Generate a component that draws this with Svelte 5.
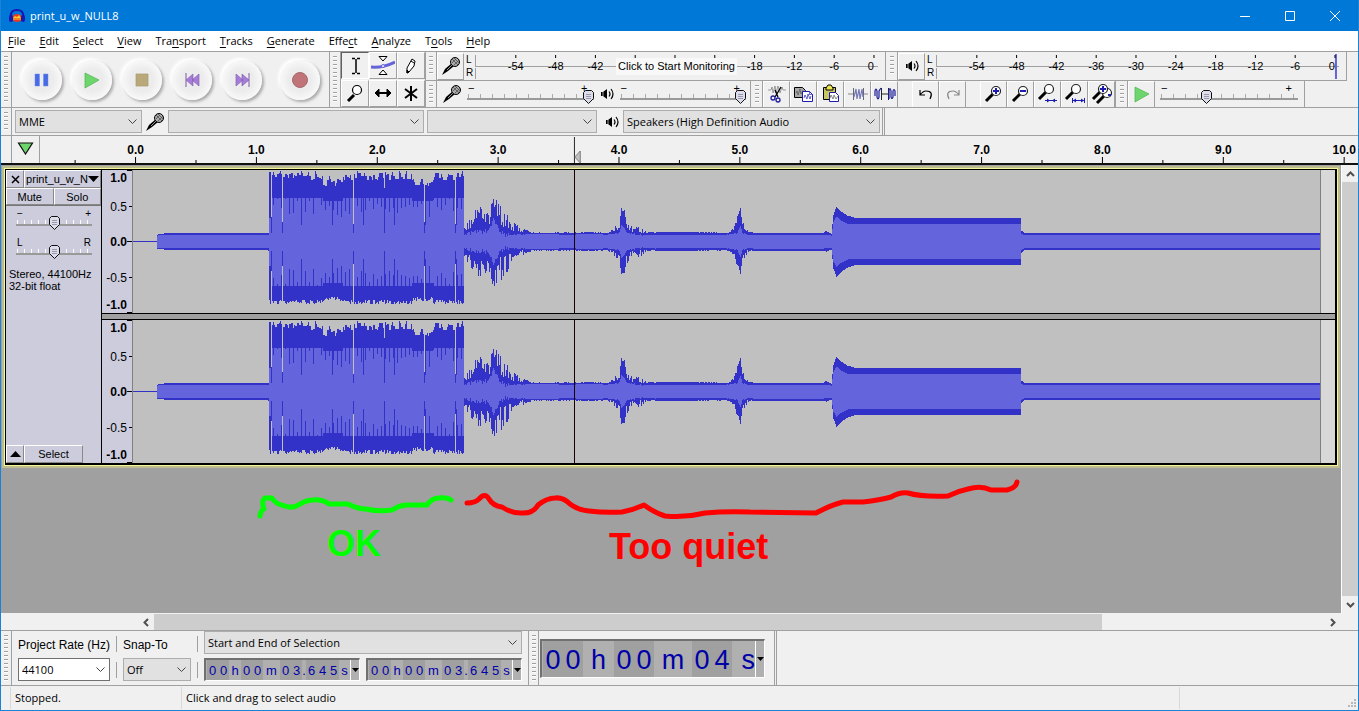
<script>
    const menus = [
        ["", "F", "ile"],
        ["", "E", "dit"],
        ["", "S", "elect"],
        ["", "V", "iew"],
        ["Tra", "n", "sport"],
        ["", "T", "racks"],
        ["", "G", "enerate"],
        ["Effe", "c", "t"],
        ["", "A", "nalyze"],
        ["T", "o", "ols"],
        ["", "H", "elp"],
    ];

    const transport = ["Pause", "Play", "Stop", "Start", "End", "Record"];
    const tools = ["Selection", "Envelope", "Draw", "Zoom", "Shift", "Multi"];
    const edits = ["Cut", "Copy", "Paste", "Trim", "Silence"];
    const zooms = ["ZoomIn", "ZoomOut", "FitSelection", "FitProject", "ZoomToggle"];
    const seconds = [0, 1, 2, 3, 4, 5, 6, 7, 8, 9, 10];
    const dbs = [-54, -48, -42, -36, -30, -24, -18, -12, -6, 0];

    const shortTime = [
        ["d", "00"],
        ["h", "h"],
        ["d", "00"],
        ["m", "m"],
        ["d", "03"],
        ["dot", "."],
        ["d", "645"],
        ["s", "s"],
    ];
    const longTime = [
        ["d", "00"],
        ["h", "h"],
        ["d", "00"],
        ["m", "m"],
        ["d", "04"],
        ["s", "s"],
    ];

    let gain = 50;
    let pan = 50;
    let recVolume = 100;
    let playVolume = 100;
    let speed = 32;

    // amplitude envelope of the clip: [x, outer, inner, jitter]
    const envelope = [
        [0, 0.5, 0, 0],
        [23, 0.5, 0, 0],
        [24, 7, 6, 0],
        [34, 8.5, 6.5, 0],
        [135, 8.5, 6.5, 0],
        [331, 16, 8, 6],
        [336, 26, 10, 14],
        [344, 40, 13, 18],
        [350, 36, 12, 20],
        [356, 35, 14, 20],
        [360, 46, 24, 10],
        [366, 40, 13, 26],
        [373, 35, 10, 22],
        [378, 20, 8, 10],
        [386, 16, 8, 7],
        [398, 10, 8, 2],
        [410, 9, 8, 1],
        [430, 10, 7, 2],
        [441, 9, 7, 1],
        [454, 10, 8, 1],
        [474, 9, 7, 1],
        [482, 16, 9, 7],
        [486, 20, 10, 8],
        [488, 34, 17, 2],
        [491, 32, 14, 4],
        [493, 22, 11, 8],
        [498, 18, 9, 9],
        [508, 15, 7, 7],
        [516, 10, 7, 2],
        [522, 9, 7, 0],
        [562, 10, 7, 1],
        [592, 9, 7, 1],
        [600, 14, 8, 4],
        [604, 28, 10, 8],
        [607, 34, 16, 2],
        [609, 22, 10, 8],
        [614, 12, 7, 4],
        [620, 9, 7, 0],
        [690, 9, 7, 0],
        [693, 11, 7, 1],
        [698, 8, 6, 0],
        [700, 27, 20, 0],
        [703, 35, 25, 0],
        [708, 30, 21, 0],
        [714, 26, 18, 0],
        [722, 23.5, 17.5, 0],
        [887, 23.5, 17.5, 0],
        [888, 11, 8, 0],
        [891, 8.5, 6.5, 0],
        [1187, 8.5, 6.5, 0],
    ];

    const dropouts = { 138: 25, 149: 20, 220: 18, 251: 54, 291: 20, 322: 18 };

    function noise(n) {
        const v = Math.sin(n * 12.9898) * 43758.5453;
        return v - Math.floor(v);
    }

    // closed staircase outline around the centre line
    function outline(ups, downs) {
        let d = "M0 71.5";
        ups.forEach((v, x) => (d += `V${Math.round(71.5 - v)}H${x + 1}`));
        for (let x = downs.length - 1; x >= 0; x--) {
            d += `V${Math.round(71.5 + downs[x])}H${x}`;
        }
        return d + "Z";
    }

    function drawWave() {
        const ups = [];
        const downs = [];
        const cores = [];
        let k = 0;
        for (let x = 0; x < 1187; x++) {
            while (envelope[k + 1][0] <= x) k++;
            const a = envelope[k];
            const b = envelope[k + 1];
            const t = (x - a[0]) / (b[0] - a[0]);
            let up = a[1] + (b[1] - a[1]) * t;
            let core = a[2] + (b[2] - a[2]) * t;
            if (x < 24) {
                up = 0.5;
                core = 0;
            } else if (x >= 135 && x < 136) {
                up = 9;
                core = 6.5;
            }
            let down = up;
            const jitter = a[3] + (b[3] - a[3]) * t;

            if (x >= 136 && x < 331) {
                const sag = (x > 189 && x < 210) || (x > 278 && x < 300) ? 6 : 0;
                up = 69 - sag - noise(x >> 1) * 8 + (x % 7 === 0 ? 3 : 0);
                down = 63 - sag / 2 - noise(x * 3) * 5;
                core = 44 - sag / 2;
                if (x % 4 === 0) core -= noise(x) * 17;
                if (x % 31 === 13) core = 17;
                if (x < 138) {
                    up = 70;
                    core = 24;
                }
                if (dropouts[x]) {
                    up = dropouts[x];
                    down = dropouts[x] + 4;
                    core = 9;
                }
            } else if (x >= 24) {
                up -= noise(x) * jitter;
                down -= noise(x + 5000) * jitter;
                core -= (noise(x + 900) * jitter) / 4;
            }
            ups.push(Math.min(up, 71));
            downs.push(down);
            cores.push(Math.max(core, 0));
        }
        return { outer: outline(ups, downs), inner: outline(cores, cores) };
    }

    const wave = drawWave();
</script>

{#snippet mic()}
    <svg width="20" height="20" viewBox="0 0 20 20">
        <path d="M1 19L4 13L11 7L13 10L7 15Z" fill="#000" />
        <path d="M6 14L11 9" stroke="#999" />
        <circle cx="14" cy="6" r="4.5" fill="#aaa" stroke="#000" />
        <path d="M11 3L17 9M13 2L18 7M11 7L15 3M13 9L18 4" stroke="#444" stroke-width="0.7" />
    </svg>
{/snippet}

{#snippet speaker()}
    <svg width="16" height="16" viewBox="0 0 16 16">
        <path d="M2 6H4L8 3V13L4 10H2Z" fill="#000" />
        <path d="M4 6V10" stroke="#eee" stroke-width="0.7" />
        <path d="M10 5.500q2 2.500 0 5M12 3q4 5 0 10" fill="none" stroke="#000" stroke-width="1.200" />
    </svg>
{/snippet}

{#snippet lens(x, y)}
    <path d="M{x - 10} {y + 10}L{x - 3} {y + 3}" stroke="#000" stroke-width="3" />
    <circle cx={x} cy={y} r="4.500" fill="#fff" stroke="#222" stroke-width="1.200" />
{/snippet}

{#snippet icon(name)}
    <svg width="24" height="24" viewBox="0 0 24 24" fill="none" stroke="#000">
        {#if name === "Pause"}
            <path d="M5 6h4.500v12H5zM13.500 6h4.500v12h-4.500z" fill="#466be6" stroke="#6f8bea" stroke-width="0.500" />
        {:else if name === "Play"}
            <path d="M5 5L19 12L5 20Z" fill="#6cd66c" stroke="#4eb050" stroke-width="0.700" />
        {:else if name === "Stop"}
            <path d="M6 6h12v12H6z" fill="#b9a97a" stroke="#a99a70" stroke-width="0.700" />
        {:else if name === "Start"}
            <path d="M13 6L6 12L13 18ZM19 6L12 12L19 18Z" fill="#a77bdb" stroke="#7a5aa5" stroke-width="0.600" />
            <path d="M6 5v14" stroke="#7a5aa5" />
        {:else if name === "End"}
            <path d="M6 6L13 12L6 18ZM12 6L19 12L12 18Z" fill="#a77bdb" stroke="#7a5aa5" stroke-width="0.600" />
            <path d="M19 5v14" stroke="#7a5aa5" />
        {:else if name === "Record"}
            <circle cx="12" cy="12" r="7.500" fill="#c07478" stroke="#a8686c" />
        {:else if name === "Selection"}
            <path d="M9 4.500h3M14 4.500h3M9 19.500h3M14 19.500h3M13 5v14" stroke-width="1.500" />
        {:else if name === "Envelope"}
            <path d="M0 13q12 1 24-5" stroke="#6464d8" stroke-width="3" />
            <path d="M8 2.500h8L12 7zM8 20.500h8L12 16z" fill="#fff" />
            <circle cx="12" cy="12" r="1.500" fill="#fff" stroke="#6464d8" />
        {:else if name === "Draw"}
            <path d="M8 19L8 14L13 5L16 7L15 12L10 18ZM8 16L10 18M12 7L15 9" fill="#fff" />
            <path d="M8 19V16L10 18Z" fill="#000" />
        {:else if name === "Zoom"}
            <path d="M5 20L11 14" stroke-width="3" />
            <circle cx="14" cy="9" r="4.500" fill="#fff" stroke-width="1.200" />
        {:else if name === "Shift"}
            <path d="M5 12H19" stroke-width="2" />
            <path d="M4 12L8 8V16ZM20 12L16 8V16Z" fill="#000" />
        {:else if name === "Multi"}
            <path d="M12 5V20M6 8L18 17M18 8L6 17" stroke-width="2" />
        {:else if name === "Cut"}
            <path d="M3 8h3l1-3 1 6 2-7 1 7 2-7 2 7 2-6 1 3h3" stroke="#777" stroke-width="0.700" />
            <path d="M16 5L10 15M10 8L13 15" stroke-width="1.300" />
            <circle cx="8" cy="16" r="2" stroke="#1c1c9c" stroke-width="1.300" />
            <circle cx="13" cy="18" r="2" stroke="#1c1c9c" stroke-width="1.300" />
        {:else if name === "Copy"}
            <path d="M2.500 5.500h8l3 3v7h-11z" fill="#aaa" />
            <path d="M4 11l1-2 1 4 2-6 1 5 2-4" stroke="#555" stroke-width="0.700" />
            <path d="M10.500 9.500h7l3 3v7h-10z" fill="#fff" stroke="#1c1cb0" />
            <path d="M17.500 9.500v3h3M12 16l1-3 2 4 1-5 2 5 1-3" stroke="#1c1cb0" stroke-width="0.700" />
        {:else if name === "Paste"}
            <path d="M4.500 5.500h12v12h-12z" fill="#c9c565" />
            <path d="M7 6l2-3h3l2 3v2H7z" fill="#eee84f" />
            <path d="M10.500 10.500h6l3 3v6h-9z" fill="#fff" stroke="#1c1cb0" />
            <path d="M11 16l1-3 2 4 1-4 2 4 2-3" stroke="#555" stroke-width="0.700" />
        {:else if name === "Trim"}
            <path d="M2 12h5M18 12h4" stroke="#888" />
            <path d="M7.500 6v12M17.500 6v12" stroke="#667" />
            <path d="M8 15l2-8 1 10 2-10 1 10 2-10 1 8" stroke="#7779b5" stroke-width="1.200" />
        {:else if name === "Silence"}
            <path d="M8 12h8" stroke="#222" />
            <path d="M8.500 6v12M15.500 6v12" stroke="#223" />
            <path d="M2 14V9q1-4 2 0v6q1 4 2 0V9l2-3M16 17V9q1-5 2 0v6q1 3 2 0V9q1-3 2 0v5" stroke="#1c1c9c" stroke-width="1.200" />
        {:else if name === "Undo"}
            <path d="M16 17q4-8-4-8-3 0-6 4M6 8v5h5" stroke-width="1.200" />
        {:else if name === "Redo"}
            <path d="M8 17q-4-8 4-8 3 0 6 4M18 8v5h-5" stroke="#888" stroke-width="1.200" />
        {:else if name === "ZoomIn"}
            {@render lens(14, 9)}
            <path d="M11 9h6M14 6v6" stroke="#1c1cb0" stroke-width="2" />
        {:else if name === "ZoomOut"}
            {@render lens(14, 9)}
            <path d="M11 9h6" stroke="#1c1cb0" stroke-width="2" />
        {:else if name === "FitSelection"}
            {@render lens(13, 7)}
            <path d="M9 18.500h12" stroke="#1c1cb0" />
            <path d="M14 18.500l-3-2v4zM16 18.500l3-2v4z" fill="#1c1cb0" stroke="none" />
        {:else if name === "FitProject"}
            {@render lens(13, 7)}
            <path d="M10 18.500h12M9.500 16v5M21.500 16v5" stroke="#1c1cb0" />
            <path d="M10 18.500l3-2v4zM21 18.500l-3-2v4z" fill="#1c1cb0" stroke="none" />
        {:else if name === "ZoomToggle"}
            {@render lens(17, 11)}
            {@render lens(13, 7)}
            <path d="M10 7h6M13 4v6M18 13h3" stroke="#1c1cb0" stroke-width="2" />
        {/if}
    </svg>
{/snippet}

{#snippet grip()}
    <div class="grip"><span></span></div>
{/snippet}

{#snippet meter(label, percent, prompt)}
    <div class="lr"><span>L</span><span>R</span></div>
    <div class="meter">
        <svg width="100%" height="26" role="img" aria-label={label}>
            <path d="M0.500 2V13M0.500 15V26" stroke="#a0a0a0" />
            <line x1="0" y1="13.500" x2="100%" y2="13.500" stroke="#a0a0a0" />
            {#if !prompt}
                <rect x="{percent}%" y="1" width="2" height="25" fill="#6464d8" />
            {/if}
            {#each dbs as db}
                {@const x = percent + (db / 60) * (percent - 0.25)}
                <line x1="{x}%" y1="2" x2="{x}%" y2="5" stroke="#000" />
                {#if !prompt || db < -40 || db > -20}
                    <text x="{x}%" y="17" text-anchor={db === 0 ? "end" : "middle"}>{db}</text>
                {/if}
            {/each}
        </svg>
        {#if prompt}
            <button class="monitor">Click to Start Monitoring</button>
        {/if}
    </div>
{/snippet}

{#snippet combo(label, value, kind)}
    <div class="combo {kind}">
        <select aria-label={label}><option>{value}</option></select>
        <svg width="9" height="6" viewBox="0 0 9 6"><path d="M0.500 0.500L4.500 4.500L8.500 0.500" fill="none" stroke="#444" /></svg>
    </div>
{/snippet}

{#snippet timer(parts, kind, label)}
    <div class="timer {kind}" role="group" aria-label={label}>
        {#each parts as [type, text]}
            <span class="part {type}">
                {#each text as ch}<i>{ch}</i>{/each}
            </span>
        {/each}
        <button aria-label="Time format"><svg width="7" height="4"><path d="M0 0H7L3.500 4Z" /></svg></button>
    </div>
{/snippet}

{#snippet channel(label)}
    <div class="channel">
        <svg class="scale" width="31" height="143">
            <text class="b" x="25" y="12">1.0</text>
            <text x="25" y="41">0.5</text>
            <text class="b" x="25" y="76">0.0</text>
            <text x="25" y="112">-0.5</text>
            <text class="b" x="25" y="139">-1.0</text>
            <path d="M27 36.500h3M25 71.500h5M27 107.500h3M25 0.500h5M25 142.500h5" stroke="#000" />
            <path d="M30.500 0v143" stroke="#808080" />
        </svg>
        <svg class="wave" viewBox="0 0 1202 143" preserveAspectRatio="none" shape-rendering="crispEdges" role="img" aria-label={label}>
            <rect x="0" y="0" width="1188" height="143" fill="#c0c0c0" />
            <rect x="1187" y="0" width="1" height="143" fill="#808080" />
            <rect x="1188" y="0" width="14" height="143" fill="#d8d8d8" />
            <path d={wave.outer} fill="#3232c8" />
            <path d={wave.inner} fill="#6464dc" />
            <rect x="441" y="0" width="1" height="143" fill="#1c0000" />
        </svg>
    </div>
{/snippet}

<div class="window">
    <header class="titlebar">
        <svg width="18" height="18" viewBox="0 0 18 18">
            <path d="M3 10Q2 3 9 3T15 10" fill="none" stroke="#1717b5" stroke-width="2" />
            <ellipse cx="9" cy="11" rx="5" ry="4" fill="#e33b1c" />
            <path d="M5 11l2-2 2 1 2-2 2 3v2H5z" fill="#ffc629" />
            <path d="M4 12h10" stroke="#e33b1c" />
            <rect x="1" y="8" width="4" height="7" rx="2" fill="#1717b5" />
            <rect x="13" y="8" width="4" height="7" rx="2" fill="#1717b5" />
        </svg>
        <h1>print_u_w_NULL8</h1>
        <button aria-label="Minimize"><svg width="10" height="10"><path d="M0 5.500h10" /></svg></button>
        <button aria-label="Maximize"><svg width="10" height="10"><path d="M0.500 0.500h9v9h-9z" /></svg></button>
        <button aria-label="Close"><svg width="10" height="10"><path d="M0 0l10 10M10 0L0 10" /></svg></button>
    </header>

    <nav class="menubar">
        {#each menus as [before, key, after]}
            <button>{before}<u>{key}</u>{after}</button>
        {/each}
    </nav>

    <section class="docks">
        <div class="bar">
            {@render grip()}
            <div class="transport">
                {#each transport as name}
                    <button class="round" class:record={name === "Record"} aria-label={name}>{@render icon(name)}</button>
                {/each}
            </div>
        </div>
        <div class="bar">
            {@render grip()}
            <div class="tools">
                {#each tools as name}
                    <button class="tool" class:pressed={name === "Selection"} aria-label={name}>{@render icon(name)}</button>
                {/each}
            </div>
        </div>
        <div class="stack">
            <div class="line">
                <div class="bar level">
                    {@render grip()}
                    <button class="tool" aria-label="Recording meter">{@render mic()}</button>
                    {@render meter("Recording level", 99, true)}
                </div>
                <div class="bar level">
                    {@render grip()}
                    <button class="tool" aria-label="Playback meter">{@render speaker()}</button>
                    {@render meter("Playback level", 99, false)}
                </div>
            </div>
            <div class="line">
                <div class="bar mixer">
                    {@render grip()}
                    {@render mic()}
                    <div class="slider">
                        <div class="marks"><span>−</span><span>+</span></div>
                        <input type="range" aria-label="Recording volume" bind:value={recVolume} />
                    </div>
                    {@render speaker()}
                    <div class="slider">
                        <div class="marks"><span>−</span><span>+</span></div>
                        <input type="range" aria-label="Playback volume" bind:value={playVolume} />
                    </div>
                </div>
                <div class="bar edit">
                    {@render grip()}
                    {#each edits as name}
                        <button class="tool" aria-label={name}>{@render icon(name)}</button>
                    {/each}
                    <span class="space"></span>
                    <button class="tool" aria-label="Undo">{@render icon("Undo")}</button>
                    <button class="tool" aria-label="Redo">{@render icon("Redo")}</button>
                    <span class="space"></span>
                    {#each zooms as name}
                        <button class="tool" aria-label={name}>{@render icon(name)}</button>
                    {/each}
                </div>
                <div class="bar speed">
                    {@render grip()}
                    <button class="tool" aria-label="Play at speed">{@render icon("Play")}</button>
                    <div class="slider">
                        <div class="marks"><span>−</span><span>+</span></div>
                        <input type="range" aria-label="Playback speed" bind:value={speed} />
                    </div>
                </div>
            </div>
        </div>
    </section>

    <section class="docks devices">
        <div class="bar">
            {@render grip()}
            {@render combo("Audio host", "MME", "host")}
            {@render mic()}
            {@render combo("Recording device", "", "input")}
            {@render combo("Recording channels", "", "channels-in")}
            {@render speaker()}
            {@render combo("Playback device", "Speakers (High Definition Audio", "output")}
        </div>
    </section>

    <section class="timeline">
        <span class="corner"></span>
        <button class="pin" aria-label="Pin play head">
            <svg width="17" height="13" viewBox="0 0 17 13"><path d="M1.500 1H15.500L8.500 12Z" fill="#6cd66c" stroke="#111" stroke-width="1.200" /></svg>
        </button>
        <svg class="ruler" width="100%" height="28">
            {#each seconds as s}
                {@const x = 7.25 + s * 9.17}
                <line x1="{x}%" y1="21" x2="{x}%" y2="27" stroke="#000" />
                <line x1="{x - 4.585}%" y1="24" x2="{x - 4.585}%" y2="27" stroke="#000" />
                <text x="{x}%" y="18" text-anchor="middle">{s}.0</text>
            {/each}
            <svg x="40.5%" width="10" height="28">
                <path d="M0.500 1V28" stroke="#000" />
                <path d="M1 21L6.500 15V27Z" fill="#c0c0c0" stroke="#808080" />
            </svg>
        </svg>
    </section>

    <main class="work">
        <div class="tracks">
            <article class="track">
                <div class="body">
                    <aside class="panel">
                        <div class="head">
                            <button aria-label="Close track"><svg width="9" height="9"><path d="M1 1l7 7M8 1L1 8" stroke="#000" stroke-width="1.500" /></svg></button>
                            <button class="name"><span>print_u_w_N</span><svg width="11" height="6"><path d="M0 0H11L5.500 6Z" /></svg></button>
                        </div>
                        <div class="mutes"><button>Mute</button><button>Solo</button></div>
                        <div class="slider small">
                            <div class="marks"><span>−</span><span>+</span></div>
                            <input type="range" aria-label="Gain" bind:value={gain} />
                        </div>
                        <div class="slider small pan">
                            <div class="marks"><span>L</span><span>R</span></div>
                            <input type="range" aria-label="Pan" bind:value={pan} />
                        </div>
                        <p>Stereo, 44100Hz<br />32-bit float</p>
                        <div class="foot">
                            <button aria-label="Collapse"><svg width="11" height="6"><path d="M0 6H11L5.500 0Z" /></svg></button>
                            <button class="select">Select</button>
                        </div>
                    </aside>
                    <div class="channels">
                        {@render channel("Left channel")}
                        {@render channel("Right channel")}
                    </div>
                </div>
            </article>
            <svg class="notes" width="100%" height="143" fill="none" stroke-width="5" stroke-linecap="round" stroke-linejoin="round">
                <path
                    d="M259 48Q260 42 263 41Q260 33 264 30L271 30Q274 36 284 38Q292 41 299 36Q306 32 312 32Q321 31 328 36L347 36Q357 41 365 41Q378 44 391 42Q399 37 406 37L426 37Q431 30 438 30Q446 29 450 32"
                    stroke="#00ff00"
                />
                <path
                    d="M466 35Q474 35 478 31Q484 24 488 31Q492 38 501 39Q510 45 520 45Q532 46 537 37Q546 30 554 30Q562 29 569 36Q577 42 588 43Q604 45 621 44Q632 42 643 37Q654 45 664 48Q684 50 704 45Q725 43 749 44L815 45Q830 37 842 34L862 34Q879 32 890 29Q899 24 907 25Q920 29 947 28Q957 23 967 21Q980 17 990 22L1006 22Q1015 20 1016 14"
                    stroke="#ff0000"
                />
                <text x="326" y="88" fill="#00ff00">OK</text>
                <text x="608" y="91" fill="#ff0000">Too quiet</text>
            </svg>
        </div>
        <div class="vscroll">
            <button aria-label="Scroll up"><svg width="9" height="6"><path d="M1 5L4.500 1.500L8 5" /></svg></button>
            <span></span>
            <button aria-label="Scroll down"><svg width="9" height="6"><path d="M1 1L4.500 4.500L8 1" /></svg></button>
        </div>
    </main>

    <div class="hscroll">
        <button aria-label="Scroll left"><svg width="6" height="9"><path d="M5 1L1.500 4.500L5 8" /></svg></button>
        <div><span></span></div>
        <button aria-label="Scroll right"><svg width="6" height="9"><path d="M1 1L4.500 4.500L1 8" /></svg></button>
    </div>

    <section class="docks bottom">
        <div class="bar selection">
            {@render grip()}
            <div class="field rate">
                <label for="rate">Project Rate (Hz)</label>
                <div class="combo editable">
                    <select id="rate"><option>44100</option></select>
                    <svg width="9" height="6" viewBox="0 0 9 6"><path d="M0.500 0.500L4.500 4.500L8.500 0.500" fill="none" stroke="#444" /></svg>
                </div>
            </div>
            <div class="rule"><i></i><i></i></div>
            <div class="field snap">
                <label for="snap">Snap-To</label>
                <div class="combo">
                    <select id="snap"><option>Off</option></select>
                    <svg width="9" height="6" viewBox="0 0 9 6"><path d="M0.500 0.500L4.500 4.500L8.500 0.500" fill="none" stroke="#444" /></svg>
                </div>
            </div>
            <div class="rule"><i></i><i></i></div>
            <div class="range">
                {@render combo("Selection mode", "Start and End of Selection", "mode")}
                <div class="times">
                    {@render timer(shortTime, "short", "Selection start")}
                    {@render timer(shortTime, "short", "Selection end")}
                </div>
            </div>
        </div>
        <div class="bar clock">
            {@render grip()}
            {@render timer(longTime, "long", "Audio position")}
        </div>
    </section>

    <footer class="status">
        <span class="state">Stopped.</span>
        <span class="hint">Click and drag to select audio</span>
        <span class="end">
            <svg width="9" height="9" fill="#b8b8b8"><path d="M6 0h2v2H6zM3 3h2v2H3zM6 3h2v2H6zM0 6h2v2H0zM3 6h2v2H3zM6 6h2v2H6z" /></svg>
        </span>
    </footer>
</div>

<style>
    :global(body) {
        margin: 0;
    }

    .window {
        display: flex;
        flex-direction: column;
        min-height: 100vh;
        box-sizing: border-box;
        border: solid #1883d7;
        border-width: 0 1px 1px;
        background: #f0f0f0;
        color: #000;
        font: 11px "Open Sans", sans-serif;
        overflow: hidden;
    }

    .window * {
        box-sizing: border-box;
    }

    svg {
        display: block;
        flex: none;
    }

    button,
    select {
        margin: 0;
        padding: 0;
        border: 0;
        border-radius: 0;
        background: none;
        color: inherit;
        font: inherit;
    }

    .titlebar {
        display: flex;
        align-items: center;
        height: 31px;
        margin: 0 -1px;
        padding: 0 2px 0 8px;
        background: #0078d7;
        color: #fff;
    }

    .titlebar h1 {
        flex: 1;
        margin: 0 0 0 4px;
        font-size: 11px;
        font-weight: 400;
    }

    .titlebar button {
        display: flex;
        justify-content: center;
        width: 45px;
    }

    .titlebar button path {
        fill: none;
        stroke: #fff;
    }

    .menubar {
        display: flex;
        height: 20px;
        background: #fff;
    }

    .menubar button {
        padding: 0 7px;
        line-height: 20px;
    }

    .menubar u {
        text-underline-offset: 2px;
    }

    /* toolbars */
    .docks {
        display: flex;
        height: 56px;
        border-top: 1px solid #a0a0a0;
    }

    .bar {
        display: flex;
        align-items: center;
        border-right: 1px solid #a0a0a0;
    }

    .grip {
        display: flex;
        justify-content: center;
        align-items: center;
        align-self: stretch;
        width: 11px;
        border-right: 1px solid #a0a0a0;
        flex: none;
    }

    .grip span {
        width: 4px;
        height: calc(100% - 8px);
        background: repeating-linear-gradient(#a0a0a0 0 1px, #fff 1px 2px, transparent 2px 4px);
    }

    .transport {
        display: flex;
        align-items: center;
        gap: 10px;
        width: 317px;
        height: 100%;
        padding-left: 10px;
    }

    .round {
        display: flex;
        align-items: center;
        justify-content: center;
        width: 40px;
        height: 40px;
        border-radius: 50%;
        background: radial-gradient(#ececec 40%, #f8f8f8 70%);
        box-shadow:
            2px 2px 3px #aaa,
            -2px -2px 3px #fff;
    }

    .round.record {
        margin-left: 8px;
    }

    .tools {
        display: grid;
        grid-template-columns: repeat(3, 28px);
        height: 100%;
    }

    .tool {
        display: flex;
        align-items: center;
        justify-content: center;
        width: 27px;
        height: 27px;
        border: 1px solid;
        border-color: #fff #a0a0a0 #a0a0a0 #fff;
        flex: none;
    }

    .tools .tool {
        width: 28px;
    }

    .tool.pressed {
        border-color: #606060 #fff #fff #606060;
    }

    .stack {
        display: flex;
        flex-direction: column;
    }

    .line {
        display: flex;
        gap: 1px;
        height: 28px;
    }

    .line + .line {
        height: 27px;
        border-top: 1px solid #a0a0a0;
    }

    .level {
        width: 460px;
    }

    .lr {
        display: flex;
        flex-direction: column;
        width: 11px;
        padding-left: 2px;
        font: 10px/13px "Liberation Sans", sans-serif;
    }

    .meter {
        display: grid;
        flex: 1;
        align-items: center;
        justify-items: center;
        margin-right: 7px;
        font: 11px "Liberation Sans", sans-serif;
    }

    .meter > * {
        grid-area: 1 / 1;
    }

    .monitor {
        height: 17px;
        padding: 0 2px;
        background: #f8f8f8;
        font: 11px/17px "Liberation Sans", sans-serif;
    }

    .mixer {
        width: 325px;
        gap: 5px;
    }

    .mixer .slider {
        flex: 1;
    }

    .mixer .slider:last-child {
        margin-right: 4px;
    }

    .edit {
        width: 364px;
    }

    .edit .space {
        flex: 1;
    }

    .speed {
        width: 188px;
    }

    .speed .slider {
        flex: 1;
        margin: 0 6px 0 5px;
    }

    .slider {
        display: flex;
        flex-direction: column;
        min-width: 0;
    }

    .marks {
        display: flex;
        justify-content: space-between;
        padding: 0 6px 0 1px;
        font: 11px/8px "Liberation Sans", sans-serif;
    }

    input[type="range"] {
        -webkit-appearance: none;
        appearance: none;
        width: 100%;
        height: 14px;
        margin: -2px 0 0;
        background:
            linear-gradient(#999, #999) 0 8px / 100% 2px no-repeat,
            repeating-linear-gradient(90deg, #aaa 0 1px, transparent 1px 12px) 1px 4px / 100% 4px no-repeat;
    }

    input[type="range"]::-webkit-slider-thumb {
        -webkit-appearance: none;
        width: 11px;
        height: 14px;
        background: url("data:image/svg+xml,%3Csvg xmlns='http://www.w3.org/2000/svg' width='11' height='14'%3E%3Cpath d='M2.500 .5h6l2 2v6l-5 5-5-5v-6z' fill='%23dcdcea' stroke='%23111'/%3E%3Cpath d='M3 4.500h5M3 6.500h5M3 8.500h5' stroke='%2399a'/%3E%3C/svg%3E");
    }

    .devices {
        height: 28px;
    }

    .devices .bar {
        gap: 3px;
        width: 884px;
        border-right: 3px double #a0a0a0;
    }

    .combo {
        display: grid;
        align-items: center;
        height: 23px;
        border: 1px solid #adadad;
        background: #e1e1e1;
    }

    .combo > * {
        grid-area: 1 / 1;
    }

    .combo svg {
        justify-self: end;
        margin-right: 4px;
        pointer-events: none;
    }

    .combo select {
        appearance: none;
        width: 100%;
        height: 100%;
        padding-left: 3px;
    }

    .host {
        width: 127px;
    }

    .input {
        width: 256px;
    }

    .channels-in {
        width: 170px;
        margin-right: 4px;
    }

    .output {
        width: 257px;
    }

    .timeline {
        display: flex;
        height: 30px;
        border-top: 1px solid #a0a0a0;
        border-bottom: 2px solid #111;
    }

    .corner {
        width: 11px;
        border-right: 1px solid #a0a0a0;
        flex: none;
    }

    .pin {
        display: flex;
        align-items: center;
        justify-content: center;
        width: 28px;
        border-right: 1px solid #a0a0a0;
        padding-bottom: 2px;
        flex: none;
    }

    .ruler {
        flex: 1;
        min-width: 0;
        font: bold 12px "Liberation Sans", sans-serif;
    }

    /* tracks */
    .work {
        display: flex;
        flex: 1;
    }

    .tracks {
        flex: 1;
        min-width: 0;
        padding-top: 1px;
        background: #a0a0a0;
    }

    .track {
        margin: 0 1px;
        padding: 1px;
        border: 2px solid #bcbc8c;
        background: #f6f69c;
    }

    .body {
        display: flex;
        border: solid #000;
        border-width: 1px 2px 2px 1px;
        background: #ccccdc;
    }

    .panel {
        display: flex;
        flex-direction: column;
        width: 96px;
        border-right: 1px solid #000;
        font: 11px "Liberation Sans", sans-serif;
    }

    .panel button {
        display: flex;
        align-items: center;
        justify-content: center;
        border: 1px solid;
        border-color: #fff #888 #888 #fff;
    }

    .head,
    .foot {
        display: flex;
        height: 18px;
    }

    .head button:first-child,
    .foot button:first-child {
        width: 18px;
        flex: none;
    }

    .head .name {
        flex: 1;
        min-width: 0;
    }

    .mutes {
        display: grid;
        grid-template-columns: 1fr 1fr;
        height: 18px;
        border-bottom: 1px solid #777;
    }

    .small {
        width: 76px;
        margin: 4px 0 0 10px;
    }

    .small input {
        background:
            linear-gradient(#999, #999) 0 8px / 100% 2px no-repeat,
            repeating-linear-gradient(90deg, #fff 0 1px, transparent 1px 7px) 1px 4px / 100% 4px no-repeat;
    }

    .small .marks {
        padding: 0 1px;
        font-size: 10px;
    }

    .pan {
        margin-top: 9px;
    }

    .panel p {
        margin: 9px 0 0 3px;
        line-height: 12px;
        white-space: nowrap;
    }

    .foot {
        margin-top: auto;
    }

    .foot .select {
        width: 59px;
    }

    .channels {
        flex: 1;
        min-width: 0;
    }

    .channel {
        display: flex;
        border-bottom: 1px solid #000;
    }

    .channel + .channel {
        border-top: 1px solid #000;
        border-bottom: 0;
    }

    .channel:first-child {
        box-shadow: 0 5px #a0a0a0;
        margin-bottom: 5px;
    }

    .scale {
        font: 12px "Liberation Sans", sans-serif;
        text-anchor: end;
    }

    .scale .b {
        font-weight: bold;
    }

    .wave {
        flex: 1;
        min-width: 0;
        height: 143px;
    }

    .notes {
        font: bold 36px "Liberation Sans", sans-serif;
    }

    .notes text {
        stroke: none;
    }

    .vscroll {
        display: flex;
        flex-direction: column;
        width: 17px;
        border-left: 1px solid #fff;
    }

    .vscroll button {
        display: flex;
        align-items: center;
        justify-content: center;
        height: 17px;
    }

    .vscroll span {
        flex: 1;
        background: #cdcdcd;
    }

    .vscroll path,
    .hscroll path {
        fill: none;
        stroke: #505050;
        stroke-width: 2;
    }

    .hscroll {
        display: flex;
        height: 17px;
        padding: 1px 17px 0 136px;
    }

    .hscroll button {
        display: flex;
        align-items: center;
        justify-content: center;
        width: 17px;
    }

    .hscroll div {
        flex: 1;
        display: flex;
    }

    .hscroll span {
        width: 81%;
        background: #cdcdcd;
    }

    /* selection bar */
    .bottom {
        border-bottom: 1px solid #a0a0a0;
    }

    .selection {
        width: 528px;
        align-items: stretch;
    }

    .field {
        display: flex;
        flex-direction: column;
        justify-content: space-between;
        padding: 6px 0 4px;
    }

    .field label {
        font: 12px/16px "Liberation Sans", sans-serif;
        white-space: nowrap;
    }

    .rate {
        width: 92px;
        margin-left: 6px;
    }

    .snap {
        width: 68px;
    }

    .editable {
        border-color: #707070;
        background: #fff;
    }

    .rule {
        display: flex;
        flex-direction: column;
        justify-content: space-between;
        align-items: center;
        width: 13px;
        padding: 5px 0 7px;
    }

    .rule i {
        width: 1px;
        height: 16px;
        background: #a0a0a0;
    }

    .range {
        display: flex;
        flex-direction: column;
        justify-content: space-between;
        width: 318px;
        padding-bottom: 4px;
    }

    .times {
        display: flex;
        justify-content: space-between;
    }

    .timer {
        display: flex;
        border: solid;
        border-width: 2px 1px 1px 2px;
        border-color: #707070 #fff #fff #707070;
        background: #b0b0b0;
        color: #0000a8;
        font-family: "Liberation Sans", sans-serif;
    }

    .part {
        display: flex;
        justify-content: center;
    }

    .part i {
        font-style: normal;
        text-align: center;
    }

    .part.d {
        background: #a0a0a0;
    }

    .timer button {
        display: flex;
        flex: 1;
        align-items: center;
        justify-content: center;
        border-left: 1px solid #fff;
    }

    .short {
        width: 156px;
        height: 23px;
        padding-left: 1px;
        font-size: 13px;
        line-height: 22px;
    }

    .short .d i {
        width: 11px;
    }

    .short .h {
        width: 12px;
    }

    .short .m {
        width: 17px;
    }

    .short .dot {
        width: 4px;
    }

    .short .s {
        width: 11px;
    }

    .clock {
        width: 248px;
        border-right: 3px double #a0a0a0;
    }

    .clock .grip {
        width: 10px;
    }

    .long {
        width: 225px;
        height: 39px;
        margin-left: 1px;
        padding-left: 1px;
        font-size: 27px;
        line-height: 38px;
    }

    .long .d i {
        width: 20px;
    }

    .long .h {
        width: 31px;
    }

    .long .m {
        width: 38px;
    }

    .long .s {
        width: 23px;
        justify-content: flex-end;
    }

    .status {
        display: flex;
        align-items: center;
        height: 24px;
    }

    .status span {
        line-height: 22px;
        border-left: 1px solid #d8d8d8;
        padding-left: 4px;
    }

    .state {
        width: 171px;
        margin-left: 9px;
    }

    .hint {
        flex: 1;
    }

    .end {
        display: flex;
        align-items: flex-end;
        justify-content: flex-end;
        width: 179px;
        height: 22px;
        padding: 0 1px 1px 0;
    }
</style>
